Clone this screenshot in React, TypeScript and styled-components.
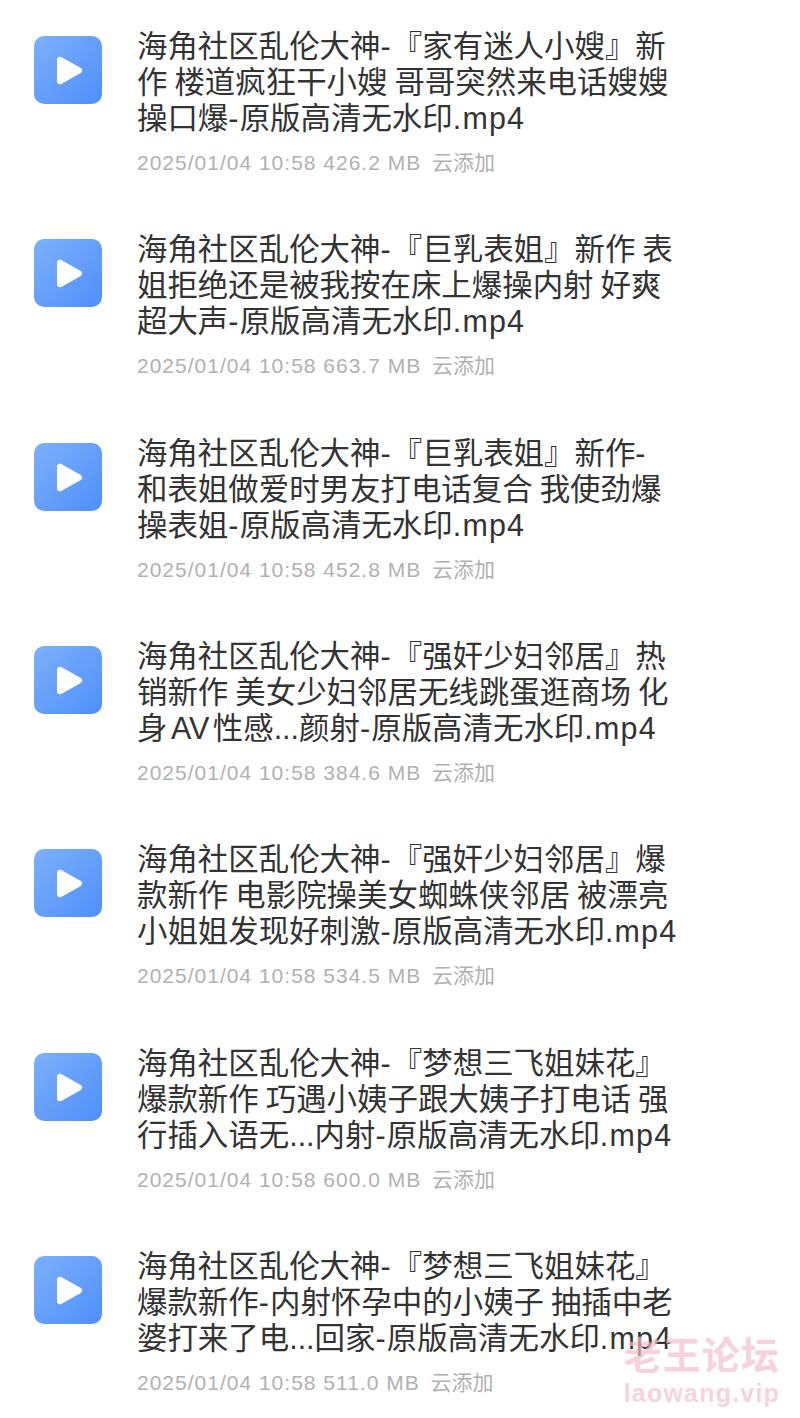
import styled, { createGlobalStyle } from "styled-components";

const GlobalStyle = createGlobalStyle`
  html, body {
    margin: 0;
    padding: 0;
    background: #fff;
  }
`;

const Page = styled.div`
  position: relative;
  width: 800px;
  height: 1418px;
  overflow: hidden;
  box-sizing: border-box;
  padding: 28px 0 0 34px;
  font-family: "Liberation Sans", "Noto Sans CJK SC", sans-serif;
`;
const Row = styled.div`
  display: flex;
  align-items: flex-start;
  gap: 35px;
  height: 203.35px;
`;
const FileIcon = styled.svg`
  flex: none;
  width: 68px;
  height: 68px;
  margin-top: 8px;
`;
const Info = styled.div`
  display: flex;
  flex-direction: column;
`;
const Title = styled.div`
  font-size: 30.45px;
  line-height: 36px;
  color: #333;
  white-space: nowrap;
  word-spacing: -1.5px;
`;
const WideLatin = styled.span`
  letter-spacing: 1.2px;
`;
const SpacedLatin = styled.span`
  margin: 0 3.5px;
`;
const Meta = styled.div`
  margin-top: 15px;
  font-size: 21px;
  line-height: 24px;
  color: #b1b1b1;
  white-space: nowrap;
`;
const MetaLatin = styled.span`
  letter-spacing: 1px;
  margin-right: 5px;
`;
const Watermark = styled.div`
  position: absolute;
  right: 20px;
  bottom: 10px;
  display: flex;
  flex-direction: column;
  align-items: center;
  color: rgba(244, 190, 205, 0.7);
  font-weight: bold;
`;
const MarkName = styled.div`
  font-size: 38px;
  line-height: 44px;
  letter-spacing: 1px;
`;
const MarkSite = styled.div`
  font-size: 25px;
  line-height: 30px;
  letter-spacing: 1.2px;
`;

interface FileItem {
  lines: string[];
  size: string;
}

const files: FileItem[] = [
  {
    lines: ["海角社区乱伦大神-『家有迷人小嫂』新", "作 楼道疯狂干小嫂 哥哥突然来电话嫂嫂", "操口爆-原版高清无水印.mp4"],
    size: "426.2 MB",
  },
  {
    lines: ["海角社区乱伦大神-『巨乳表姐』新作 表", "姐拒绝还是被我按在床上爆操内射 好爽", "超大声-原版高清无水印.mp4"],
    size: "663.7 MB",
  },
  {
    lines: ["海角社区乱伦大神-『巨乳表姐』新作-", "和表姐做爱时男友打电话复合 我使劲爆", "操表姐-原版高清无水印.mp4"],
    size: "452.8 MB",
  },
  {
    lines: ["海角社区乱伦大神-『强奸少妇邻居』热", "销新作 美女少妇邻居无线跳蛋逛商场 化", "身AV性感...颜射-原版高清无水印.mp4"],
    size: "384.6 MB",
  },
  {
    lines: ["海角社区乱伦大神-『强奸少妇邻居』爆", "款新作 电影院操美女蜘蛛侠邻居 被漂亮", "小姐姐发现好刺激-原版高清无水印.mp4"],
    size: "534.5 MB",
  },
  {
    lines: ["海角社区乱伦大神-『梦想三飞姐妹花』", "爆款新作 巧遇小姨子跟大姨子打电话 强", "行插入语无...内射-原版高清无水印.mp4"],
    size: "600.0 MB",
  },
  {
    lines: ["海角社区乱伦大神-『梦想三飞姐妹花』", "爆款新作-内射怀孕中的小姨子 抽插中老", "婆打来了电...回家-原版高清无水印.mp4"],
    size: "511.0 MB",
  },
];

// the reference's latin glyphs run wider than Liberation Sans, so they get their own spacing
function renderLine(line: string) {
  return line.split(/(-|\.mp4|AV)/).map((part, i) => {
    if (part === "AV") return <SpacedLatin key={i}>{part}</SpacedLatin>;
    if (part === "-" || part === ".mp4") return <WideLatin key={i}>{part}</WideLatin>;
    return part;
  });
}

function VideoIcon() {
  return (
    <FileIcon viewBox="0 0 68 68">
      <defs>
        <linearGradient id="tile" x1="0" y1="0" x2="1" y2="1">
          <stop offset="0" stopColor="#7cb0fb" />
          <stop offset="1" stopColor="#4f8ffb" />
        </linearGradient>
      </defs>
      <rect width="68" height="68" rx="10" fill="url(#tile)" />
      <path
        d="M23 23.5c0-2.2 2.3-3.5 4.2-2.4l19.6 11c1.9 1.1 1.9 3.7 0 4.8l-19.6 11c-1.9 1.1-4.2-.2-4.2-2.4z"
        fill="#fff"
      />
    </FileIcon>
  );
}

export default function App() {
  return (
    <Page>
      <GlobalStyle />
      {files.map((file) => (
        <Row key={file.size}>
          <VideoIcon />
          <Info>
            <Title>
              {file.lines.map((line) => (
                <div key={line}>{renderLine(line)}</div>
              ))}
            </Title>
            <Meta>
              <MetaLatin>2025/01/04 10:58 {file.size}</MetaLatin> 云添加
            </Meta>
          </Info>
        </Row>
      ))}
      <Watermark>
        <MarkName>老王论坛</MarkName>
        <MarkSite>laowang.vip</MarkSite>
      </Watermark>
    </Page>
  );
}
